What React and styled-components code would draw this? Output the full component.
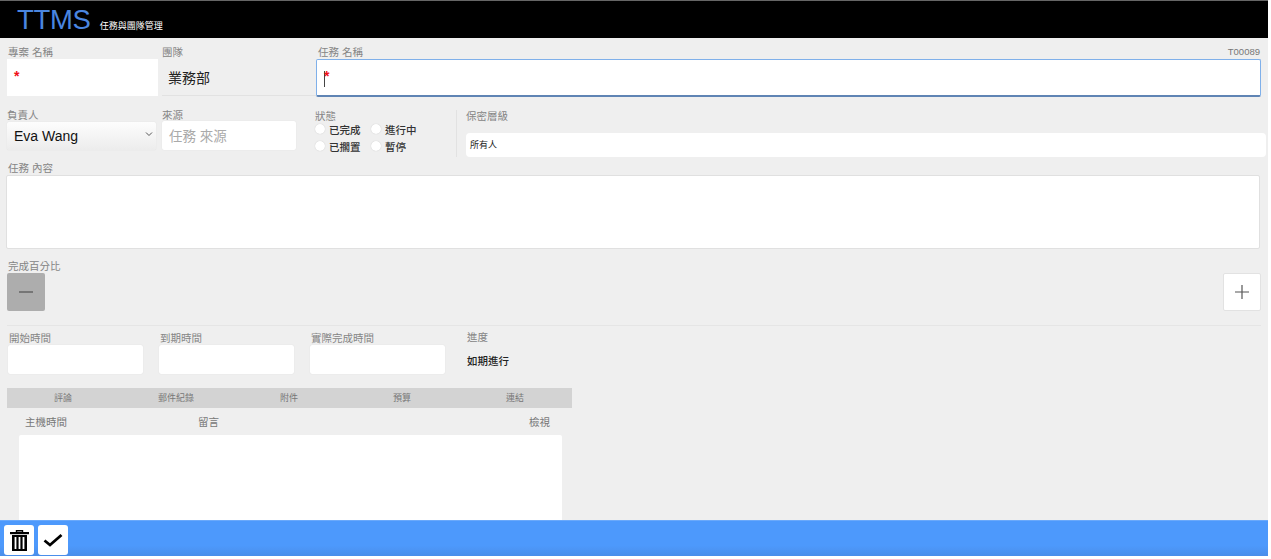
import React from 'react'
import styled, { createGlobalStyle } from 'styled-components'

const GlobalStyle = createGlobalStyle`
html, body {
    margin: 0;
    height: 100%;
    background: #fff;
    overflow: hidden;
}
* {
    box-sizing: border-box;
}
`

const tabs = ['評論', '郵件紀錄', '附件', '預算', '連結']

const App = () => {
    return (
        <Page>
            <GlobalStyle />
            <Header>
                <Logo>TTMS</Logo>
                <Subtitle>任務與團隊管理</Subtitle>
            </Header>
            <Main>
                <TopRow>
                    <Field>
                        <Label $indent={1}>專案 名稱</Label>
                        <BigInput><Star>*</Star></BigInput>
                    </Field>
                    <Field>
                        <Label>團隊</Label>
                        <TeamValue>業務部</TeamValue>
                    </Field>
                    <Field>
                        <LabelRow>
                            <Label $indent={2}>任務 名稱</Label>
                            <TaskNo>T00089</TaskNo>
                        </LabelRow>
                        <FocusedInput><Caret /><TaskStar>*</TaskStar></FocusedInput>
                    </Field>
                </TopRow>

                <SecondRow>
                    <Field $width={149}>
                        <Label>負責人</Label>
                        <SelectBox>
                            Eva Wang
                            <Chevron viewBox="0 0 8 6"><path d="M1 1.5 L4 4.5 L7 1.5" /></Chevron>
                        </SelectBox>
                    </Field>
                    <SourceField>
                        <Label>來源</Label>
                        <SourceInput>任務 來源</SourceInput>
                    </SourceField>
                    <StatusBox>
                        <Label>狀態</Label>
                        <RadioGrid>
                            <Radio><Dot />已完成</Radio>
                            <Radio><Dot />進行中</Radio>
                            <Radio><Dot />已擱置</Radio>
                            <Radio><Dot />暫停</Radio>
                        </RadioGrid>
                    </StatusBox>
                    <SecrecyBox>
                        <SecrecyLabel>保密層級</SecrecyLabel>
                        <SecrecyValue>所有人</SecrecyValue>
                    </SecrecyBox>
                </SecondRow>

                <ContentBlock>
                    <Label $indent={1}>任務 內容</Label>
                    <ContentArea />
                </ContentBlock>

                <PercentBlock>
                    <Label $indent={1}>完成百分比</Label>
                    <StepRow>
                        <MinusButton>
                            <svg width="16" height="16" viewBox="0 0 16 16"><path d="M1 8 H15" stroke="#5f5f5f" strokeWidth="1.4" /></svg>
                        </MinusButton>
                        <PlusButton>
                            <svg width="16" height="16" viewBox="0 0 16 16"><path d="M1 8 H15 M8 1 V15" stroke="#555" strokeWidth="1.2" /></svg>
                        </PlusButton>
                    </StepRow>
                </PercentBlock>

                <Divider />

                <DateRow>
                    <Field $width={135}>
                        <Label $indent={1}>開始時間</Label>
                        <DateInput />
                    </Field>
                    <Field $width={135}>
                        <Label $indent={1}>到期時間</Label>
                        <DateInput />
                    </Field>
                    <Field $width={135}>
                        <Label $indent={1}>實際完成時間</Label>
                        <DateInput />
                    </Field>
                    <ProgressBox>
                        <Label>進度</Label>
                        <ProgressValue>如期進行</ProgressValue>
                    </ProgressBox>
                </DateRow>

                <TabBar>
                    {tabs.map(t => <Tab key={t}>{t}</Tab>)}
                </TabBar>

                <TableHead>
                    <HeadTime>主機時間</HeadTime>
                    <HeadMessage>留言</HeadMessage>
                    <span>檢視</span>
                </TableHead>
                <TableBody />
            </Main>
            <Footer>
                <IconButton aria-label="delete">
                    <svg width="19" height="21" viewBox="0 0 19 21">
                        <path d="M6.5 2 V0.8 H12.5 V2" fill="none" stroke="#000" strokeWidth="1.4" />
                        <rect x="0" y="2" width="19" height="2.2" fill="#000" />
                        <path d="M2 5 H17 V21 H2 Z M4.6 7 V19 H6.4 V7 Z M8.6 7 V19 H10.4 V7 Z M12.6 7 V19 H14.4 V7 Z" fill="#000" fillRule="evenodd" />
                    </svg>
                </IconButton>
                <IconButton aria-label="save">
                    <svg width="20" height="14" viewBox="0 0 20 14">
                        <path d="M1.5 7.5 L7 12 L18.5 2" fill="none" stroke="#000" strokeWidth="2.8" />
                    </svg>
                </IconButton>
            </Footer>
        </Page>
    )
}

const Page = styled.div`
width: 1268px;
height: 556px;
display: flex;
flex-direction: column;
overflow: hidden;
background: #efefef;
border-top: 1px solid #666;
font-family: "Liberation Sans", "Noto Sans CJK TC", sans-serif;
`
const Header = styled.div`
height: 37px;
flex-shrink: 0;
padding-left: 17px;
display: flex;
align-items: baseline;
gap: 9px;
background: #000;
`
const Logo = styled.div`
font-size: 27.5px;
line-height: 38px;
letter-spacing: -0.3px;
color: #4a86e0;
`
const Subtitle = styled.div`
font-size: 9px;
margin-top: -1px;
color: #fff;
`
const Main = styled.div`
flex: 1;
min-height: 0;
overflow: hidden;
padding: 1px 7px 0;
`
const Field = styled.div`
display: flex;
flex-direction: column;
min-width: 0;
${props => props.$width ? `width: ${props.$width}px; flex-shrink: 0;` : ''}
`
const Label = styled.div`
height: 14px;
margin-left: ${props => props.$indent || 0}px;
font-size: 10.5px;
line-height: 14px;
white-space: nowrap;
color: #858585;
`
const TopRow = styled.div`
display: grid;
grid-template-columns: 151px 150px 945px;
column-gap: 4px;
align-items: end;
padding-top: 6px;
`
const BigInput = styled.div`
height: 37px;
padding: 7px 7px;
background: #fff;
font-size: 14px;
`
const Star = styled.span`
color: #f01018;
font-size: 14px;
font-weight: 700;
line-height: 20px;
`
const TaskStar = styled(Star)`
margin-top: -5px;
`
const TeamValue = styled.div`
height: 37px;
padding: 9px 6px;
font-size: 14px;
line-height: 20px;
color: #222;
border-bottom: 1px solid #e2e2e2;
margin-right: -4px;
`
const LabelRow = styled.div`
display: flex;
justify-content: space-between;
`
const TaskNo = styled.div`
margin-right: 1px;
font-size: 9.5px;
line-height: 14px;
color: #777;
`
const FocusedInput = styled.div`
height: 38px;
margin-bottom: -1px;
padding: 11px 7px 0;
display: flex;
align-items: flex-start;
background: #fff;
border: 1px solid #7fb0ea;
border-bottom: 2px solid #5f84b4;
border-radius: 2px;
`
const Caret = styled.span`
width: 1px;
height: 16px;
margin-right: -1px;
background: #444;
`
const SecondRow = styled.div`
display: flex;
align-items: flex-start;
height: 49px;
margin-top: 12px;
`
const SelectBox = styled.div`
height: 28px;
padding: 0 7px;
display: flex;
align-items: center;
justify-content: space-between;
font-size: 14px;
color: #111;
background: linear-gradient(#fdfdfd, #ececec);
border-radius: 2px;
box-shadow: 0 0 1px #cfcfcf;
`
const Chevron = styled.svg`
width: 8px;
height: 6px;
margin-right: -4px;
margin-top: -4px;
fill: none;
stroke: #555;
stroke-width: 1;
`
const SourceField = styled(Field)`
width: 134px;
flex-shrink: 0;
margin-left: 6px;
`
const SourceInput = styled.div`
height: 29px;
margin-top: -1px;
padding: 0 7px 2px;
display: flex;
align-items: center;
font-size: 13.5px;
color: #aaa;
background: #fff;
border-radius: 2px;
box-shadow: 0 0 1px #d5d5d5;
`
const StatusBox = styled.div`
width: 141px;
height: 47px;
margin-left: 19px;
padding-top: 1px;
`
const RadioGrid = styled.div`
display: grid;
grid-template-columns: 56px 56px;
row-gap: 3px;
margin-top: -1px;
`
const Radio = styled.div`
display: flex;
align-items: center;
gap: 4px;
height: 14px;
font-size: 10.5px;
font-weight: 500;
color: #333;
`
const Dot = styled.span`
width: 10px;
height: 10px;
border-radius: 50%;
background: #fff;
box-shadow: 0 0 1px #bbb;
`
const SecrecyBox = styled.div`
flex: 1;
height: 47px;
padding-left: 9px;
border-left: 1px solid #e2e2e2;
margin-top: 2px;
`
const SecrecyLabel = styled(Label)`
margin-top: -1px;
`
const SecrecyValue = styled.div`
height: 24px;
margin-top: 10px;
margin-right: -5px;
padding-left: 4px;
font-size: 9px;
line-height: 24px;
color: #222;
background: #fff;
border-radius: 4px;
`
const ContentBlock = styled.div`
margin-top: 4px;
`
const ContentArea = styled.div`
width: 1254px;
height: 74px;
margin-left: -1px;
background: #fff;
border: 1px solid #e0e0e0;
border-radius: 2px;
`
const PercentBlock = styled.div`
margin-top: 10px;
`
const StepRow = styled.div`
width: 1254px;
display: flex;
justify-content: space-between;
`
const MinusButton = styled.div`
width: 38px;
height: 38px;
display: flex;
align-items: center;
justify-content: center;
background: #adadad;
border-radius: 2px;
`
const PlusButton = styled(MinusButton)`
background: #fff;
border: 1px solid #e2e2e2;
`
const Divider = styled.div`
width: 1254px;
height: 1px;
margin-top: 14px;
background: #e5e5e5;
`
const DateRow = styled.div`
display: flex;
gap: 16px;
margin-top: 5px;
padding-left: 1px;
`
const DateInput = styled.div`
height: 29px;
background: #fff;
border-radius: 2px;
box-shadow: 0 0 1px #cfcfcf;
`
const ProgressBox = styled.div`
margin-left: 6px;
margin-top: -1px;
`
const ProgressValue = styled.div`
margin-top: 10px;
font-size: 10.5px;
font-weight: 500;
line-height: 14px;
color: #222;
`
const TabBar = styled.div`
width: 565px;
height: 20px;
margin-top: 14px;
display: grid;
grid-template-columns: repeat(5, 1fr);
background: #d3d3d3;
`
const Tab = styled.div`
padding-right: 1px;
font-size: 9px;
line-height: 20px;
text-align: center;
color: #777;
`
const TableHead = styled.div`
width: 542px;
height: 27px;
margin-left: 18px;
padding-right: 17px;
display: flex;
justify-content: space-between;
align-items: center;
font-size: 10.5px;
color: #777;
`
const HeadTime = styled.span`
width: 173px;
`
const HeadMessage = styled.span`
flex: 1;
`
const TableBody = styled.div`
width: 543px;
height: 110px;
margin-left: 12px;
background: #fff;
border-radius: 2px;
`
const Footer = styled.div`
height: 36px;
flex-shrink: 0;
padding: 4px;
display: flex;
gap: 4px;
background: linear-gradient(#4d99fc 70%, #4a8eea);
border-top: 1px solid #6aa9fb;
`
const IconButton = styled.button`
width: 30px;
height: 30px;
padding: 0;
display: flex;
align-items: center;
justify-content: center;
background: #fff;
border: none;
border-radius: 3px;
`

export default App
